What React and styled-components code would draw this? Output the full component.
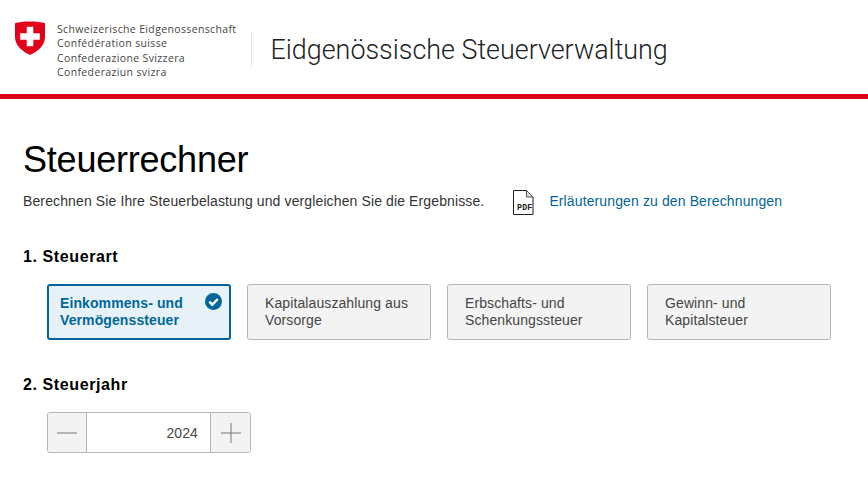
import React from 'react'
import styled, { createGlobalStyle } from 'styled-components'

const GlobalStyle = createGlobalStyle`
  html, body {
    margin: 0;
    padding: 0;
    background: #fff;
    font-family: "Liberation Sans", Arial, sans-serif;
    color: #000;
  }
`

const Header = styled.header`
  box-sizing: border-box;
  height: 99px;
  display: flex;
  align-items: center;
  padding: 5px 0 0 15px;
  border-bottom: 5px solid #dc0018;
`

const Shield = styled.svg`
  width: 30px;
  height: 34px;
  margin-top: -24px;
  flex: none;
`

const Names = styled.div`
  margin-left: 12px;
  margin-top: 2px;
  font-family: "Open Sans", sans-serif;
  font-size: 10.5px;
  line-height: 14.5px;
  letter-spacing: 0.36px;
  color: #454545;
`

const Divider = styled.div`
  width: 1px;
  height: 35px;
  background: #e4e4e4;
  margin: 0 18px 0 15px;
`

const Agency = styled.div`
  font-family: Roboto, sans-serif;
  font-weight: 300;
  font-size: 26.9px;
  color: #222;
`

const Main = styled.main`
  padding: 38px 23px 0;
`

const Title = styled.h1`
  margin: 0;
  font-size: 36px;
  line-height: 46px;
  font-weight: 400;
  letter-spacing: -0.22px;
`

const Intro = styled.div`
  display: flex;
  align-items: center;
  margin: 4px 0 32px;
  height: 28px;
  font-size: 14px;
  letter-spacing: 0.12px;
  color: #333;
`

const PdfIcon = styled.svg`
  width: 21px;
  height: 25px;
  margin: 3px 15px 0 29px;
  flex: none;
`

const DocLink = styled.a`
  color: #006699;
  text-decoration: none;
`

const SectionTitle = styled.h2`
  margin: 0;
  font-size: 16px;
  line-height: 20px;
  font-weight: 700;
  letter-spacing: 0.6px;
`

const Cards = styled.div`
  display: flex;
  gap: 16px;
  margin: 17px 0 35px 24px;
`

const Card = styled.div`
  position: relative;
  box-sizing: border-box;
  width: 184px;
  height: 56px;
  padding: ${p => (p.$active ? '9px 11px' : '10px 17px')};
  font-size: 14px;
  line-height: 17px;
  letter-spacing: 0.1px;
  font-weight: ${p => (p.$active ? 700 : 400)};
  color: ${p => (p.$active ? '#006699' : '#454545')};
  background: ${p => (p.$active ? '#e6f2f8' : '#f3f3f3')};
  border: ${p => (p.$active ? '2px solid #006699' : '1px solid #b5b5b5')};
  border-radius: 3px;
`

const CheckBadge = styled.svg`
  position: absolute;
  top: 7px;
  right: 7px;
  width: 17px;
  height: 17px;
`

const Stepper = styled.div`
  display: flex;
  box-sizing: border-box;
  width: 204px;
  height: 41px;
  margin: 17px 0 0 24px;
  border: 1px solid #b5b5b5;
  border-radius: 3px;
  overflow: hidden;
`

const StepButton = styled.div`
  width: ${p => p.$width}px;
  flex: none;
  display: flex;
  align-items: center;
  justify-content: center;
  background: #f3f3f3;
`

const StepValue = styled.div`
  flex: 1;
  display: flex;
  align-items: center;
  justify-content: flex-end;
  padding-right: 12px;
  font-size: 14px;
  letter-spacing: 0.1px;
  color: #454545;
  border-left: 1px solid #b5b5b5;
  border-right: 1px solid #b5b5b5;
`

const cards = [
  ['Einkommens- und', 'Vermögenssteuer'],
  ['Kapitalauszahlung aus', 'Vorsorge'],
  ['Erbschafts- und', 'Schenkungssteuer'],
  ['Gewinn- und', 'Kapitalsteuer'],
]

export default function App() {
  return (
    <>
      <GlobalStyle />
      <Header>
        <Shield viewBox="0 0 30 34">
          <path d="M0 2.2 C6 0 24 0 30 2.2 L30 16 C30 24.5 22.5 30.5 15 34 C7.5 30.5 0 24.5 0 16 Z" fill="#e2001a" />
          <path d="M11.7 5.7 H18.3 V12.2 H24.8 V18.8 H18.3 V25.3 H11.7 V18.8 H5.2 V12.2 H11.7 Z" fill="#fff" />
        </Shield>
        <Names>
          Schweizerische Eidgenossenschaft<br />
          Confédération suisse<br />
          Confederazione Svizzera<br />
          Confederaziun svizra
        </Names>
        <Divider />
        <Agency>Eidgenössische Steuerverwaltung</Agency>
      </Header>
      <Main>
        <Title>Steuerrechner</Title>
        <Intro>
          Berechnen Sie Ihre Steuerbelastung und vergleichen Sie die Ergebnisse.
          <PdfIcon viewBox="0 0 21 25">
            <path d="M0.5 0.5 H13.5 L20 7 V24.5 H0.5 Z" fill="#fff" stroke="#222" strokeWidth="1" />
            <path d="M20 7 V24.5" stroke="#888" strokeWidth="1" />
            <path d="M13.5 0.5 V7 H20 Z" fill="#ddd" stroke="#555" strokeWidth="1" />
            <text x="4" y="19.5" fontFamily="Liberation Mono, monospace" fontSize="8.4" fontWeight="700" fill="#222">PDF</text>
          </PdfIcon>
          <DocLink href="#">Erläuterungen zu den Berechnungen</DocLink>
        </Intro>
        <SectionTitle>1. Steuerart</SectionTitle>
        <Cards>
          {cards.map((lines, i) => (
            <Card key={lines[0]} $active={i === 0}>
              {lines[0]}<br />{lines[1]}
              {i === 0 && (
                <CheckBadge viewBox="0 0 17 17">
                  <circle cx="8.5" cy="8.5" r="8.5" fill="#006699" />
                  <path d="M4.3 8.7 L7.3 11.7 L12.8 6" fill="none" stroke="#fff" strokeWidth="2.4" />
                </CheckBadge>
              )}
            </Card>
          ))}
        </Cards>
        <SectionTitle>2. Steuerjahr</SectionTitle>
        <Stepper>
          <StepButton $width={38}>
            <svg width="20" height="20" viewBox="0 0 20 20"><path d="M0 10 H20" stroke="#777" strokeWidth="1" /></svg>
          </StepButton>
          <StepValue>2024</StepValue>
          <StepButton $width={39}>
            <svg width="20" height="20" viewBox="0 0 20 20"><path d="M0 10 H20 M10 0 V20" stroke="#777" strokeWidth="1" /></svg>
          </StepButton>
        </Stepper>
      </Main>
    </>
  )
}
